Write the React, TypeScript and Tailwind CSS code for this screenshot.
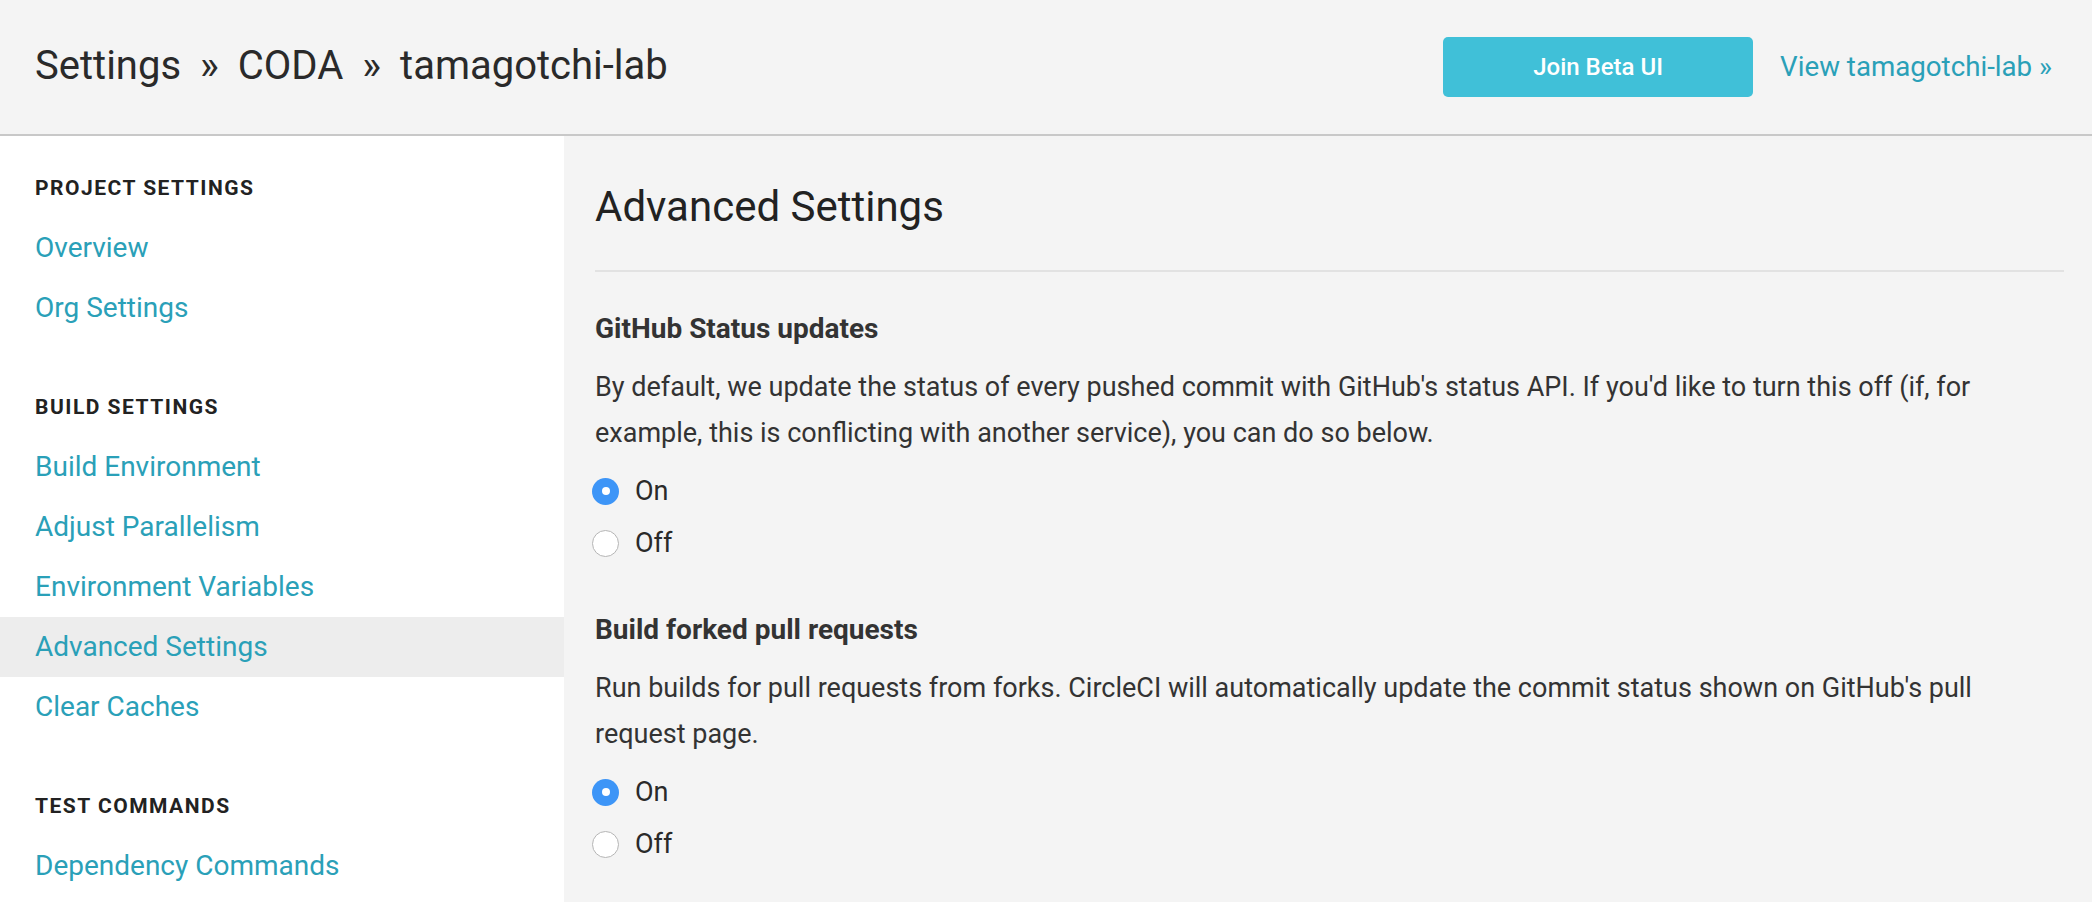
import React from "react";

type NavItem = { label: string; active?: boolean };
type NavSection = { title: string; items: NavItem[] };

const sections: NavSection[] = [
  {
    title: "PROJECT SETTINGS",
    items: [{ label: "Overview" }, { label: "Org Settings" }],
  },
  {
    title: "BUILD SETTINGS",
    items: [
      { label: "Build Environment" },
      { label: "Adjust Parallelism" },
      { label: "Environment Variables" },
      { label: "Advanced Settings", active: true },
      { label: "Clear Caches" },
    ],
  },
  {
    title: "TEST COMMANDS",
    items: [{ label: "Dependency Commands" }],
  },
];

const Radio: React.FC<{ checked?: boolean; label: string }> = ({ checked, label }) => (
  <label className="flex items-center gap-[16px] h-[52px] ml-[-3px]">
    {checked ? (
      <span className="w-[27px] h-[27px] rounded-full bg-[#3d95f7] flex items-center justify-center">
        <span className="w-[8px] h-[8px] rounded-full bg-white" />
      </span>
    ) : (
      <span className="w-[27px] h-[27px] rounded-full bg-white border border-[#b5b5b5]" />
    )}
    <span className="text-[27px] text-[#2a2a2a]">{label}</span>
  </label>
);

const Setting: React.FC<{ title: string; text: string; first?: boolean }> = ({ title, text, first }) => (
  <section className={first ? "mt-[39px]" : "mt-[43px]"}>
    <h3 className="text-[28px] leading-[36px] font-bold text-[#333]">{title}</h3>
    <p className="mt-[17px] text-[27px] leading-[46px] text-[#333]">{text}</p>
    <div className="mt-[9px]">
      <Radio checked label="On" />
      <Radio label="Off" />
    </div>
  </section>
);

export default function App() {
  return (
    <div className="h-screen flex flex-col bg-[#f4f4f4] font-['Roboto',sans-serif] overflow-hidden">
      {/* header */}
      <header className="h-[136px] shrink-0 flex items-center justify-between pl-[35px] pr-[40px] border-b-2 border-[#c8c8c8]">
        <div className="text-[40px] text-[#2a2a2a] pb-[2px]">
          Settings<span className="mx-[19px]">»</span>CODA<span className="mx-[19px]">»</span>tamagotchi-lab
        </div>
        <div className="flex items-center gap-[27px]">
          <button className="w-[310px] h-[60px] rounded-[5px] bg-[#40c0d8] text-white text-[24px] font-medium">
            Join Beta UI
          </button>
          <a className="text-[27.7px] text-[#2aa0b8]">View tamagotchi-lab »</a>
        </div>
      </header>

      <div className="flex flex-1 min-h-0">
        {/* sidebar */}
        <aside className="w-[564px] shrink-0 bg-white pt-[22px]">
          {sections.map((s, i) => (
            <div key={s.title} className={i > 0 ? "mt-[39px]" : ""}>
              <div className="h-[60px] flex items-center px-[35px] pt-[2px] text-[21px] font-bold tracking-[1.5px] text-[#222]">
                {s.title}
              </div>
              {s.items.map((item) => (
                <div
                  key={item.label}
                  className={
                    "h-[60px] flex items-center px-[35px] text-[28px] text-[#2aa0b8] " +
                    (item.active ? "bg-[#ededed]" : "")
                  }
                >
                  {item.label}
                </div>
              ))}
            </div>
          ))}
        </aside>

        {/* main */}
        <main className="flex-1 pl-[31px] pr-[28px]">
          <h1 className="mt-[43px] text-[42px] leading-[56px] text-[#222]">Advanced Settings</h1>
          <div className="mt-[35px] border-t-2 border-[#e2e2e2]" />
          <Setting
            first
            title="GitHub Status updates"
            text="By default, we update the status of every pushed commit with GitHub's status API. If you'd like to turn this off (if, for example, this is conflicting with another service), you can do so below."
          />
          <Setting
            title="Build forked pull requests"
            text="Run builds for pull requests from forks. CircleCI will automatically update the commit status shown on GitHub's pull request page."
          />
        </main>
      </div>
    </div>
  );
}
